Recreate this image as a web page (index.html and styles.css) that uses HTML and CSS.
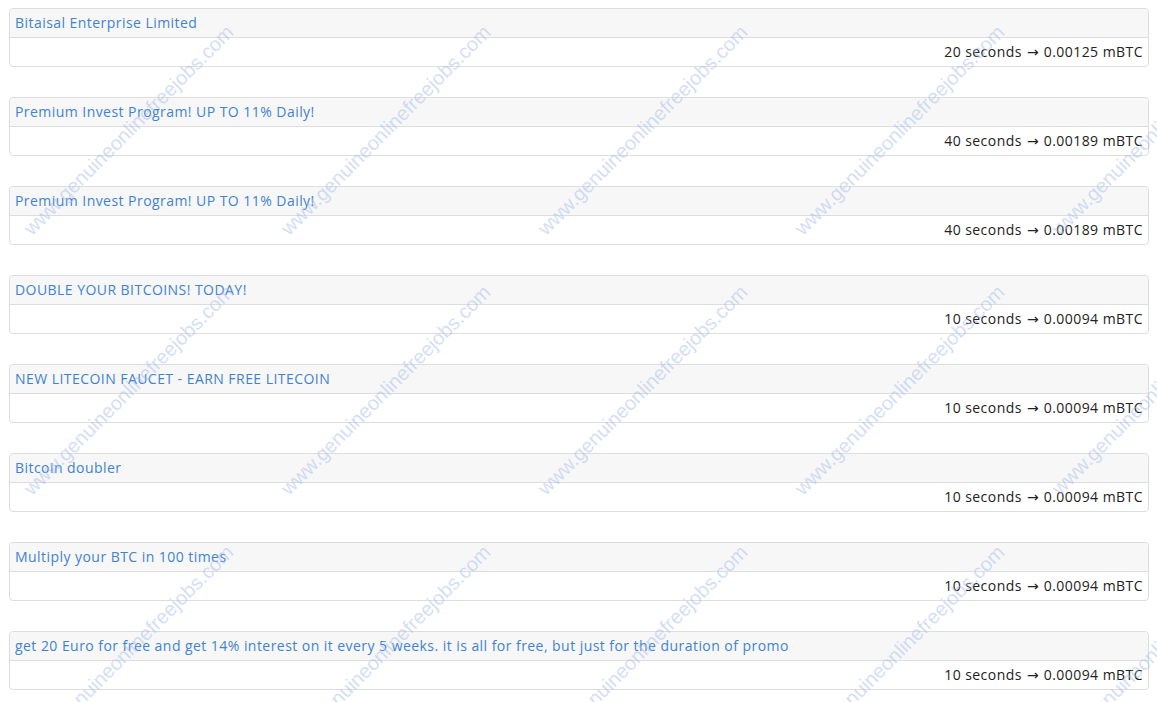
FILE: index.html
```html
<!DOCTYPE html>
<html lang="en">
<head>
    <meta charset="UTF-8">
    <title>Faucet list</title>
    <link rel="stylesheet" href="styles.css">
</head>
<body>

<div class="list">
    <div class="panel">
        <div class="panel-heading"><a href="#">Bitaisal Enterprise Limited</a></div>
        <div class="panel-body">20 seconds <span class="arrow">&rarr;</span> 0.00125 mBTC</div>
    </div>
    <div class="panel">
        <div class="panel-heading"><a href="#">Premium Invest Program! UP TO 11% Daily!</a></div>
        <div class="panel-body">40 seconds <span class="arrow">&rarr;</span> 0.00189 mBTC</div>
    </div>
    <div class="panel">
        <div class="panel-heading"><a href="#">Premium Invest Program! UP TO 11% Daily!</a></div>
        <div class="panel-body">40 seconds <span class="arrow">&rarr;</span> 0.00189 mBTC</div>
    </div>
    <div class="panel">
        <div class="panel-heading"><a href="#">DOUBLE YOUR BITCOINS! TODAY!</a></div>
        <div class="panel-body">10 seconds <span class="arrow">&rarr;</span> 0.00094 mBTC</div>
    </div>
    <div class="panel">
        <div class="panel-heading"><a href="#">NEW LITECOIN FAUCET - EARN FREE LITECOIN</a></div>
        <div class="panel-body">10 seconds <span class="arrow">&rarr;</span> 0.00094 mBTC</div>
    </div>
    <div class="panel">
        <div class="panel-heading"><a href="#">Bitcoin doubler</a></div>
        <div class="panel-body">10 seconds <span class="arrow">&rarr;</span> 0.00094 mBTC</div>
    </div>
    <div class="panel">
        <div class="panel-heading"><a href="#">Multiply your BTC in 100 times</a></div>
        <div class="panel-body">10 seconds <span class="arrow">&rarr;</span> 0.00094 mBTC</div>
    </div>
    <div class="panel">
        <div class="panel-heading"><a href="#">get 20 Euro for free and get 14% interest on it every 5 weeks. it is all for free, but just for the duration of promo</a></div>
        <div class="panel-body">10 seconds <span class="arrow">&rarr;</span> 0.00094 mBTC</div>
    </div>
</div>

<!-- watermark -->
<div class="watermark">
    <span>www.genuineonlinefreejobs.com</span><span>www.genuineonlinefreejobs.com</span><span>www.genuineonlinefreejobs.com</span><span>www.genuineonlinefreejobs.com</span><span>www.genuineonlinefreejobs.com</span>
    <span>www.genuineonlinefreejobs.com</span><span>www.genuineonlinefreejobs.com</span><span>www.genuineonlinefreejobs.com</span><span>www.genuineonlinefreejobs.com</span><span>www.genuineonlinefreejobs.com</span>
    <span>www.genuineonlinefreejobs.com</span><span>www.genuineonlinefreejobs.com</span><span>www.genuineonlinefreejobs.com</span><span>www.genuineonlinefreejobs.com</span><span>www.genuineonlinefreejobs.com</span>
</div>

</body>
</html>
```

FILE: styles.css
```css
body {
    font-family: "Open Sans", "Noto Sans", sans-serif;
    font-size: 14px;
    letter-spacing: 0.45px;
    margin: 0;
    padding: 0;
    background-color: #fff;
    color: #222;
    overflow: hidden;
}
.list {
    padding: 8px 8px 0 9px;
}
.panel {
    border: 1px solid #ddd;
    border-radius: 4px;
    margin-bottom: 30px;
    background-color: #fff;
}
.panel-heading {
    background-color: #f7f7f7;
    border-bottom: 1px solid #ddd;
    border-radius: 4px 4px 0 0;
    height: 28px;
    line-height: 28px;
    padding: 0 5px;
}
.panel-heading a {
    color: #3f83cf;
    text-decoration: none;
}
.panel-body {
    height: 28px;
    line-height: 28px;
    padding: 0 5px;
    text-align: right;
}
.arrow {
    font-family: "DejaVu Sans", sans-serif;
    letter-spacing: 0;
    margin: 0 1px;
}
.watermark {
    position: absolute;
    top: 0;
    left: 0;
    display: grid;
    grid-template-columns: repeat(5, 257px);
    grid-auto-rows: 260px;
    pointer-events: none;
}
.watermark span {
    display: flex;
    align-items: center;
    justify-content: center;
    transform: rotate(-45deg);
    font-family: "Liberation Sans", Arial, sans-serif;
    font-size: 20px;
    letter-spacing: 0;
    color: rgba(170, 188, 238, 0.5);
    white-space: nowrap;
}
```
